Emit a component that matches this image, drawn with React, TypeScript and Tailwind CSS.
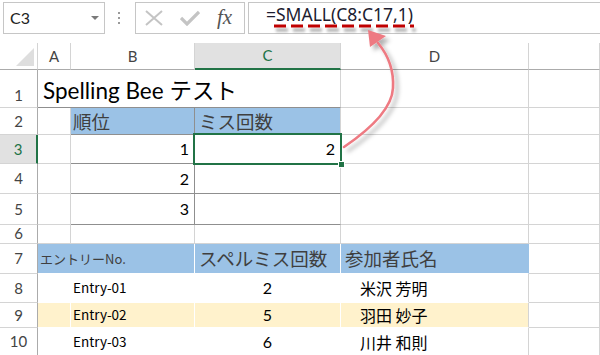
import React from "react";

const RH =
  "flex items-center justify-center border-r border-b border-r-[#ababab] border-b-[#d4d4d4] bg-white text-[15px] text-[#444] leading-none";
const CH =
  "flex items-center justify-center border-r border-b border-r-[#d4d4d4] border-b-[#ababab] text-[15px] text-[#444] leading-none";
const G = "border-r border-b border-[#d4d4d4]";
const JP = "font-['Noto_Sans_CJK_JP',sans-serif]";

export default function App() {
  return (
    <div className="relative w-[600px] h-[355px] overflow-hidden bg-white font-[Lato,'Noto_Sans_CJK_JP',sans-serif] text-black">
      {/* toolbar */}
      <div className="flex h-[43px] items-start pt-[2px]">
        <div className="ml-[3px] flex h-[32px] w-[102px] items-center justify-between border border-[#c6c6c6] pl-[6px] pr-[5px]">
          <span className="text-[16px] leading-none text-[#222]">C3</span>
          <svg width="8" height="4" viewBox="0 0 8 4">
            <polygon points="0,0 8,0 4,4" fill="#7a7a7a" />
          </svg>
        </div>
        <div className="ml-[13px] mt-[10px] flex w-[3px] flex-col gap-[3px]">
          <div className="h-[2px] w-[2px] bg-[#9a9a9a]" />
          <div className="h-[2px] w-[2px] bg-[#9a9a9a]" />
          <div className="h-[2px] w-[2px] bg-[#9a9a9a]" />
        </div>
        <div className="ml-[14px] flex h-[32px] w-[110px] items-center border border-[#c6c6c6] pl-[9px]">
          <svg width="18" height="16" viewBox="0 0 18 16">
            <path d="M1 1 L17 15 M17 1 L1 15" stroke="#c4c4c4" strokeWidth="2" fill="none" />
          </svg>
          <svg className="ml-[17px]" width="20" height="16" viewBox="0 0 20 16">
            <path d="M1 8 L7 14 L19 2" stroke="#c4c4c4" strokeWidth="3.2" fill="none" />
          </svg>
          <span className="ml-[17px] mt-[-2px] font-['Liberation_Serif',serif] text-[21px] italic leading-none text-[#555]">
            fx
          </span>
        </div>
        <div className="ml-[3px] flex h-[32px] flex-1 items-center border-y border-l border-[#c6c6c6] pl-[17px] pb-[6px]">
          <span className="font-['Noto_Sans',sans-serif] text-[17.5px] leading-none text-[#1c1c30]">
            =SMALL(C8:C17,1)
          </span>
        </div>
      </div>

      {/* sheet grid */}
      <div className="grid grid-cols-[38px_33px_124px_146px_188px_1fr] grid-rows-[27px_38px_27px_29px_30px_31px_19px_30px_29px_25px_28px]">
        {/* column headers */}
        <div className="relative border-r border-b border-r-[#d4d4d4] border-b-[#ababab]">
          <svg className="absolute left-[16px] top-[5px]" width="18" height="18" viewBox="0 0 18 18">
            <polygon points="18,0 18,18 0,18" fill="#dedede" />
          </svg>
        </div>
        <div className={CH}>A</div>
        <div className={CH}>B</div>
        <div className="flex items-center justify-center border-r border-b-2 border-r-[#d4d4d4] border-b-[#217346] bg-[#e1e1e1] text-[15px] leading-none text-[#217346]">
          C
        </div>
        <div className={CH}>D</div>
        <div className={CH}></div>

        {/* row 1 */}
        <div className={RH}>
          <span className="mt-[14px]">1</span>
        </div>
        <div className="col-span-3 flex items-end whitespace-nowrap border-r border-b border-r-[#d4d4d4] border-b-[#8f8f8f] pb-[5px] pl-[5px] text-[22.5px] leading-none">
          Spelling Bee テスト
        </div>
        <div className={G}></div>
        <div className={G}></div>

        {/* row 2 */}
        <div className={RH}>2</div>
        <div className={G}></div>
        <div className={`flex items-center border-r border-b border-r-[#8f8f8f] border-b-[#8f8f8f] bg-[#9bc2e6] pl-[2px] text-[18.5px] leading-none text-[#3f3f3f] ${JP}`}>
          順位
        </div>
        <div className={`flex items-center border-r border-b border-r-[#d4d4d4] border-b-[#8f8f8f] bg-[#9bc2e6] pl-[4px] text-[18.5px] leading-none text-[#3f3f3f] ${JP}`}>
          ミス回数
        </div>
        <div className={G}></div>
        <div className={G}></div>

        {/* row 3 */}
        <div className="flex items-center justify-center border-r-2 border-b border-r-[#217346] border-b-[#d4d4d4] bg-[#e1e1e1] text-[15px] leading-none text-[#217346]">
          3
        </div>
        <div className={G}></div>
        <div className="flex items-center justify-end border-r border-b border-[#8f8f8f] pr-[5px] text-[16px] leading-none">
          1
        </div>
        <div className="relative flex items-center justify-end border-r border-b border-r-[#d4d4d4] border-b-[#8f8f8f] pr-[5px] text-[16px] leading-none">
          2
          <div className="absolute left-[-2px] top-[-2px] right-[-2px] bottom-[-2px] border-2 border-[#217346]" />
          <div className="absolute right-[-5px] bottom-[-5px] h-[7px] w-[7px] border border-white bg-[#217346]" />
        </div>
        <div className={G}></div>
        <div className={G}></div>

        {/* row 4 */}
        <div className={RH}>4</div>
        <div className={G}></div>
        <div className="flex items-center justify-end border-r border-b border-[#8f8f8f] pr-[5px] text-[16px] leading-none">
          2
        </div>
        <div className="border-r border-b border-r-[#d4d4d4] border-b-[#8f8f8f]"></div>
        <div className={G}></div>
        <div className={G}></div>

        {/* row 5 */}
        <div className={RH}>5</div>
        <div className={G}></div>
        <div className="flex items-center justify-end border-r border-b border-[#8f8f8f] pr-[5px] text-[16px] leading-none">
          3
        </div>
        <div className="border-r border-b border-r-[#d4d4d4] border-b-[#8f8f8f]"></div>
        <div className={G}></div>
        <div className={G}></div>

        {/* row 6 */}
        <div className="flex items-center justify-center border-r border-b border-r-[#ababab] border-b-[#d4d4d4] pb-[2px] text-[15px] leading-none text-[#444]">
          6
        </div>
        <div className={G}></div>
        <div className={G}></div>
        <div className={G}></div>
        <div className={G}></div>
        <div className={G}></div>

        {/* row 7 */}
        <div className={RH}>7</div>
        <div className={`col-span-2 flex items-center whitespace-nowrap border-r border-b border-white bg-[#9bc2e6] pl-[2px] text-[13px] leading-none text-[#3f3f3f] ${JP}`}>
          エントリーNo.
        </div>
        <div className={`flex items-center border-r border-b border-white bg-[#9bc2e6] pl-[4px] text-[18.5px] leading-none text-[#3f3f3f] ${JP}`}>
          スペルミス回数
        </div>
        <div className={`flex items-center border-r border-b border-r-[#9bc2e6] border-b-white bg-[#9bc2e6] pl-[4px] text-[18.5px] leading-none text-[#3f3f3f] ${JP}`}>
          参加者氏名
        </div>
        <div className={G}></div>

        {/* row 8 */}
        <div className={RH}>8</div>
        <div className="border-r border-b border-white"></div>
        <div className={`flex items-center border-r border-b border-white pl-[2px] text-[13.5px] leading-none ${JP}`}>Entry-01</div>
        <div className="flex items-center justify-center border-r border-b border-white text-[16px] leading-none">2</div>
        <div className={`flex items-center border-r border-b border-r-[#d4d4d4] border-b-white pl-[19px] text-[16px] leading-none ${JP}`}>米沢 芳明</div>
        <div className={G}></div>

        {/* row 9 */}
        <div className={RH}>9</div>
        <div className="border-r border-b border-white bg-[#fff2cc]"></div>
        <div className={`flex items-center border-r border-b border-white bg-[#fff2cc] pl-[2px] text-[13.5px] leading-none ${JP}`}>Entry-02</div>
        <div className="flex items-center justify-center border-r border-b border-white bg-[#fff2cc] text-[16px] leading-none">5</div>
        <div className={`flex items-center border-r border-b border-r-[#d4d4d4] border-b-white bg-[#fff2cc] pl-[19px] text-[16px] leading-none ${JP}`}>羽田 妙子</div>
        <div className={G}></div>

        {/* row 10 */}
        <div className={RH}>10</div>
        <div className="border-r border-b border-white"></div>
        <div className={`flex items-center border-r border-b border-white pl-[2px] text-[13.5px] leading-none ${JP}`}>Entry-03</div>
        <div className="flex items-center justify-center border-r border-b border-white text-[16px] leading-none">6</div>
        <div className={`flex items-center border-r border-b border-r-[#d4d4d4] border-b-white pl-[19px] text-[16px] leading-none ${JP}`}>川井 和則</div>
        <div className={G}></div>
      </div>

      {/* annotation overlay */}
      <svg className="pointer-events-none absolute left-0 top-0" width="600" height="355" viewBox="0 0 600 355">
        <defs>
          <filter id="sh1" filterUnits="userSpaceOnUse" x="260" y="15" width="170" height="25">
            <feDropShadow dx="2" dy="4" stdDeviation="1.4" floodColor="#000" floodOpacity="0.35" />
          </filter>
          <filter id="sh2" filterUnits="userSpaceOnUse" x="330" y="20" width="90" height="145">
            <feDropShadow dx="4" dy="4" stdDeviation="2" floodColor="#000" floodOpacity="0.3" />
          </filter>
        </defs>
        <line x1="274" y1="26" x2="414" y2="26" stroke="#c00000" strokeWidth="3" strokeDasharray="12 5" filter="url(#sh1)" />
        <g filter="url(#sh2)">
          <path d="M344 147 C372 128 392 108 393 88 C394 70 388 55 378 43" stroke="#ee7a82" strokeWidth="2.6" fill="none" strokeLinecap="round" />
          <polygon points="368,30 370,47 386,36" fill="#ee7a82" />
        </g>
      </svg>
    </div>
  );
}
